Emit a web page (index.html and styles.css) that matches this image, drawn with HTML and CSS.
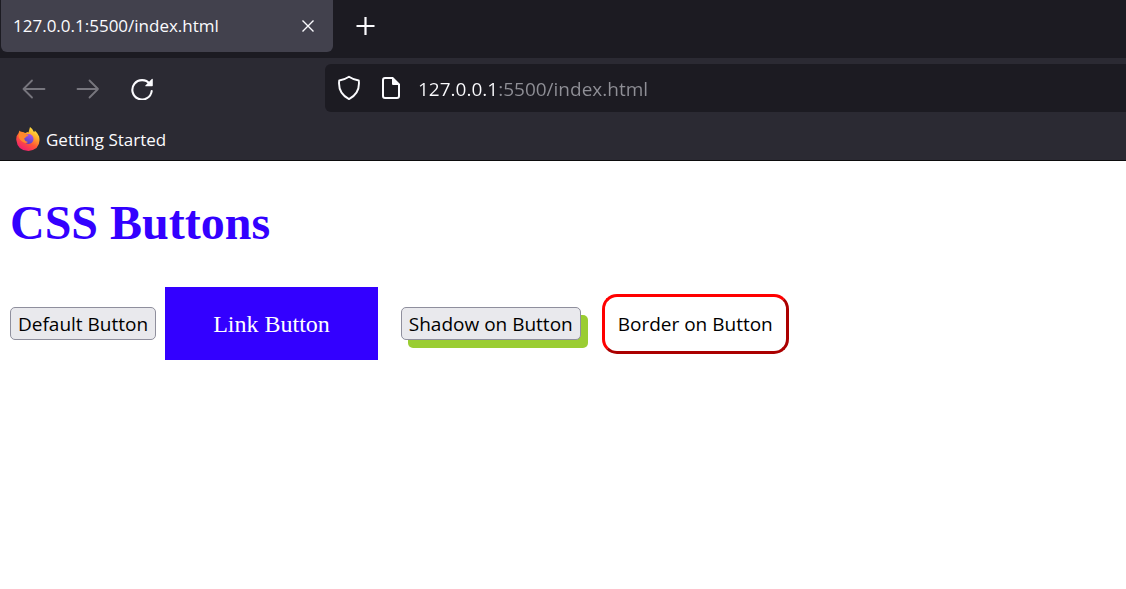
FILE: index.html
```html
<!DOCTYPE html>
<html lang="en">
<head>
<meta charset="utf-8">
<title>CSS Buttons</title>
<link rel="stylesheet" href="styles.css">
</head>
<body>
<header class="browser">
  <div class="tabs">
    <div class="tab">
      <span class="tab-title">127.0.0.1:5500/index.html</span>
      <button class="icon-button close" aria-label="Close tab"><svg width="14" height="14" viewBox="0 0 14 14"><path d="M1.5 1.5l11 11M12.5 1.5l-11 11" fill="none" stroke="#fbfbfe" stroke-width="1.4"/></svg></button>
    </div>
    <button class="icon-button" aria-label="New tab"><svg width="20" height="20" viewBox="0 0 20 20"><path d="M10.500 1v18M1.500 10h18" fill="none" stroke="#fbfbfe" stroke-width="2.2"/></svg></button>
  </div>
  <div class="toolbar">
    <nav class="navigation">
      <button class="icon-button" aria-label="Back"><svg width="24" height="24" viewBox="0 0 24 24"><path d="M10 4.500L1.500 13l8.500 8.500M1.500 13h21" fill="none" stroke="#77767e" stroke-width="1.8" stroke-linecap="round" stroke-linejoin="round"/></svg></button>
      <button class="icon-button" aria-label="Forward"><svg width="24" height="24" viewBox="0 0 24 24"><path d="M13.500 4.500L22 13l-8.500 8.500M22 13H1.500" fill="none" stroke="#77767e" stroke-width="1.8" stroke-linecap="round" stroke-linejoin="round"/></svg></button>
      <button class="icon-button" aria-label="Reload"><svg width="24" height="24" viewBox="0 0 24 24"><path d="M19.800 8A9.700 9.700 0 1 0 21.700 15" fill="none" stroke="#fbfbfe" stroke-width="2.100" stroke-linecap="round"/><path d="M22.800 3.300v6.300q0 .7-.7.700h-6.400q-1-.2-.3-.9l6.400-6.300q.8-.6 1 .2z" fill="#fbfbfe"/></svg></button>
    </nav>
    <div class="address">
      <svg width="24" height="26" viewBox="0 0 24 26"><path d="M12 1.700Q17 5 21.800 5.500Q23.300 18.300 12 24.100Q.7 18.300 2.200 5.500Q7 5 12 1.700z" fill="none" stroke="#fbfbfe" stroke-width="1.900" stroke-linejoin="round"/></svg>
      <svg width="20" height="24" viewBox="0 0 20 24"><path d="M12 2H4Q2 2 2 4v16q0 2 2 2h12q2 0 2-2V8.500" fill="none" stroke="#fbfbfe" stroke-width="2"/><path d="M11 1h1l7 7v1h-7q-1 0-1-1z" fill="#fbfbfe"/></svg>
      <input class="url" type="text" aria-label="Address" value="127.0.0.1:5500/index.html">
    </div>
  </div>
  <a class="bookmark" href="#">
    <svg width="24" height="24" viewBox="0 0 24 24">
      <defs>
        <linearGradient id="flame" x1=".85" y1="0" x2=".25" y2="1"><stop offset="0" stop-color="#fff44f"/><stop offset=".3" stop-color="#ffb52b"/><stop offset=".62" stop-color="#ff5636"/><stop offset="1" stop-color="#ef1778"/></linearGradient>
        <linearGradient id="globe" x1=".7" y1="0" x2=".3" y2="1"><stop offset="0" stop-color="#a953ed"/><stop offset="1" stop-color="#4b43bd"/></linearGradient>
      </defs>
      <path d="M3.500 3.500L5.500 6q2-.8 4 .1Q12 4.500 12.500 5.500L14 0q3 2 4 5q1-.5.800-1.500q3 2.500 4.300 6q2.500 13-10.600 14.500Q1.500 23.800.3 13Q0 8.500 2.500 6.200z" fill="url(#flame)"/>
      <circle cx="12.500" cy="12" r="5" fill="url(#globe)"/>
      <path d="M3.500 4.500Q8 4.500 10 7.500l2.500.3q-.3 1.500-2.500 1.900q-.8 1.500-2 1.800q.8 3 4 3.500q-2 2-4.500.3Q3 13 2.500 9z" fill="#ff872d"/>
    </svg>
    <span>Getting Started</span>
  </a>
</header>
<main class="page">
  <h1 class="title">CSS Buttons</h1>
  <div class="samples">
    <button class="button">Default Button</button>
    <a class="link-button" href="#">Link Button</a>
    <button class="button shadow">Shadow on Button</button>
    <button class="button border">Border on Button</button>
  </div>
</main>
</body>
</html>
```

FILE: styles.css
```css
* { box-sizing: border-box; }
body {
  margin: 0;
  background: #fff;
  font-family: "Liberation Serif", serif;
}
.browser {
  background: #2b2a33;
  border-bottom: 1px solid #0c0c0d;
  color: #fbfbfe;
  font-family: "Open Sans", sans-serif;
}
.icon-button {
  display: flex;
  padding: 0;
  border: 0;
  background: transparent;
}
.tabs {
  display: flex;
  align-items: center;
  gap: 22px;
  height: 58px;
  padding: 0 0 6px 1px;
  background: #1c1b22;
}
.tab {
  display: flex;
  align-items: center;
  justify-content: space-between;
  width: 332px;
  height: 52px;
  padding: 0 18px 0 12px;
  border-radius: 0 0 6px 6px;
  background: #42414d;
}
.tab-title {
  font-size: 17px;
  line-height: 22px;
}
.toolbar {
  display: flex;
  align-items: center;
  height: 60px;
}
.navigation {
  display: flex;
  gap: 30px;
  width: 325px;
  padding-left: 22px;
}
.address {
  display: flex;
  flex: 1;
  align-items: center;
  height: 48px;
  padding-left: 12px;
  border-radius: 6px 0 0 6px;
  background: #1c1b22;
  gap: 20px;
}
.url {
  flex: 1;
  height: 32px;
  padding: 2px 0 0;
  margin-left: -3px;
  border: 0;
  background: linear-gradient(90deg, #fbfbfe 79px, #8f8f96 79px);
  background-clip: text;
  -webkit-background-clip: text;
  -webkit-text-fill-color: transparent;
  color: #fbfbfe;
  font: 19px "Open Sans", sans-serif;
}
.bookmark {
  display: flex;
  align-items: center;
  gap: 6px;
  height: 42px;
  padding-left: 16px;
  color: #fbfbfe;
  font-size: 17px;
  text-decoration: none;
}
.page { padding: 34px 10px; }
.title {
  margin: 0 0 36px;
  color: #30f;
  font-size: 48px;
  line-height: 56px;
}
.samples {
  display: flex;
  align-items: center;
}
.button {
  padding: 1px 7px 0;
  border: 1px solid #8f8f9d;
  border-radius: 5px;
  background: #e9e9ed;
  color: #000;
  font: 19px/30px "Open Sans", sans-serif;
}
.link-button {
  margin: 0 23px 0 9px;
  padding: 21px 48px 19px;
  background: #30f;
  color: #fff;
  font-size: 24px;
  line-height: 33px;
  text-decoration: none;
}
.shadow { box-shadow: 7px 8px yellowgreen; }
.border {
  margin-left: 21px;
  padding: 12px 13px;
  border: 3px outset red;
  border-radius: 15px;
  background: #fff;
}
```
